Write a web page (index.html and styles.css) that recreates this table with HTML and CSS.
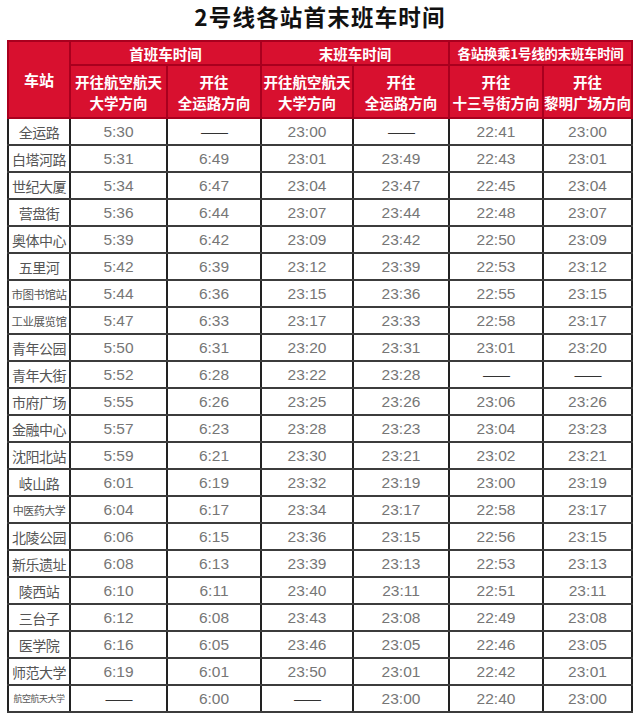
FILE: index.html
```html
<!DOCTYPE html>
<html lang="zh">
<head>
<meta charset="utf-8">
<link rel="stylesheet" href="styles.css">
</head>
<body>
<div class="title">2号线各站首末班车时间</div>
<table class="sched">
<colgroup>
<col class="c1"><col class="c2"><col class="c3"><col class="c4"><col class="c5"><col class="c6"><col class="c7">
</colgroup>
<thead>
<tr class="h1">
<th rowspan="2" class="stn-h">车站</th>
<th colspan="2">首班车时间</th>
<th colspan="2">末班车时间</th>
<th colspan="2" class="narrow">各站换乘1号线的末班车时间</th>
</tr>
<tr class="h2">
<th>开往航空航天<br>大学方向</th>
<th>开往<br>全运路方向</th>
<th>开往航空航天<br>大学方向</th>
<th>开往<br>全运路方向</th>
<th>开往<br>十三号街方向</th>
<th>开往<br>黎明广场方向</th>
</tr>
</thead>
<tbody>
<tr><td class="stn">全运路</td><td>5:30</td><td class="dash">——</td><td>23:00</td><td class="dash">——</td><td>22:41</td><td>23:00</td></tr>
<tr><td class="stn">白塔河路</td><td>5:31</td><td>6:49</td><td>23:01</td><td>23:49</td><td>22:43</td><td>23:01</td></tr>
<tr><td class="stn">世纪大厦</td><td>5:34</td><td>6:47</td><td>23:04</td><td>23:47</td><td>22:45</td><td>23:04</td></tr>
<tr><td class="stn">营盘街</td><td>5:36</td><td>6:44</td><td>23:07</td><td>23:44</td><td>22:48</td><td>23:07</td></tr>
<tr><td class="stn">奥体中心</td><td>5:39</td><td>6:42</td><td>23:09</td><td>23:42</td><td>22:50</td><td>23:09</td></tr>
<tr><td class="stn">五里河</td><td>5:42</td><td>6:39</td><td>23:12</td><td>23:39</td><td>22:53</td><td>23:12</td></tr>
<tr><td class="stn sm">市图书馆站</td><td>5:44</td><td>6:36</td><td>23:15</td><td>23:36</td><td>22:55</td><td>23:15</td></tr>
<tr><td class="stn sm">工业展览馆</td><td>5:47</td><td>6:33</td><td>23:17</td><td>23:33</td><td>22:58</td><td>23:17</td></tr>
<tr><td class="stn">青年公园</td><td>5:50</td><td>6:31</td><td>23:20</td><td>23:31</td><td>23:01</td><td>23:20</td></tr>
<tr><td class="stn">青年大街</td><td>5:52</td><td>6:28</td><td>23:22</td><td>23:28</td><td class="dash">——</td><td class="dash">——</td></tr>
<tr><td class="stn">市府广场</td><td>5:55</td><td>6:26</td><td>23:25</td><td>23:26</td><td>23:06</td><td>23:26</td></tr>
<tr><td class="stn">金融中心</td><td>5:57</td><td>6:23</td><td>23:28</td><td>23:23</td><td>23:04</td><td>23:23</td></tr>
<tr><td class="stn">沈阳北站</td><td>5:59</td><td>6:21</td><td>23:30</td><td>23:21</td><td>23:02</td><td>23:21</td></tr>
<tr><td class="stn">岐山路</td><td>6:01</td><td>6:19</td><td>23:32</td><td>23:19</td><td>23:00</td><td>23:19</td></tr>
<tr><td class="stn xs">中医药大学</td><td>6:04</td><td>6:17</td><td>23:34</td><td>23:17</td><td>22:58</td><td>23:17</td></tr>
<tr><td class="stn">北陵公园</td><td>6:06</td><td>6:15</td><td>23:36</td><td>23:15</td><td>22:56</td><td>23:15</td></tr>
<tr><td class="stn">新乐遗址</td><td>6:08</td><td>6:13</td><td>23:39</td><td>23:13</td><td>22:53</td><td>23:13</td></tr>
<tr><td class="stn">陵西站</td><td>6:10</td><td>6:11</td><td>23:40</td><td>23:11</td><td>22:51</td><td>23:11</td></tr>
<tr><td class="stn">三台子</td><td>6:12</td><td>6:08</td><td>23:43</td><td>23:08</td><td>22:49</td><td>23:08</td></tr>
<tr><td class="stn">医学院</td><td>6:16</td><td>6:05</td><td>23:46</td><td>23:05</td><td>22:46</td><td>23:05</td></tr>
<tr><td class="stn">师范大学</td><td>6:19</td><td>6:01</td><td>23:50</td><td>23:01</td><td>22:42</td><td>23:01</td></tr>
<tr><td class="stn tiny">航空航天大学</td><td class="dash">——</td><td>6:00</td><td class="dash">——</td><td>23:00</td><td>22:40</td><td>23:00</td></tr>
</tbody>
</table>
</body>
</html>
```

FILE: styles.css
```css
html, body {
  margin: 0;
  padding: 0;
  background: #ffffff;
}

.title {
  height: 40px;
  line-height: 32px;
  text-align: center;
  font-family: "Noto Sans CJK SC", "Liberation Serif", serif;
  font-weight: 700;
  font-size: 22.5px;
  color: #111111;
  letter-spacing: 1.2px;
}

.sched {
  margin-left: 7px;
  width: 624px;
  table-layout: fixed;
  border-collapse: collapse;
}

.c1 { width: 62px; }
.c2 { width: 97px; }
.c3 { width: 94px; }
.c4 { width: 92px; }
.c5 { width: 96px; }
.c6 { width: 94px; }
.c7 { width: 89px; }

.sched th {
  background: #d8102f;
  color: #ffffff;
  font-family: "Noto Sans CJK SC", "Liberation Sans", sans-serif;
  font-weight: 700;
  font-size: 14.5px;
  line-height: 21px;
  border: 2px solid #a9001e;
  padding: 0;
  text-align: center;
  vertical-align: middle;
  white-space: nowrap;
}

.sched th.stn-h {
  font-size: 15px;
}

.sched th.narrow {
  font-size: 13.5px;
  letter-spacing: -0.3px;
}

.h1 { height: 24px; }
.h2 { height: 53px; }

.sched td {
  height: 25px;
  padding: 0;
  text-align: center;
  vertical-align: middle;
  font-family: "Liberation Sans", "Noto Sans CJK SC", sans-serif;
  font-size: 15.5px;
  color: #767676;
  border-left: 2px solid #222222;
  border-right: 2px solid #222222;
  border-top: 2px solid #3c3c3c;
  border-bottom: 2px solid #3c3c3c;
}

.sched td.stn {
  font-family: "Noto Sans CJK SC", sans-serif;
  font-size: 14px;
  color: #555555;
  white-space: nowrap;
  letter-spacing: -0.5px;
}

.sched td.stn.sm { font-size: 11.5px; letter-spacing: -0.5px; }
.sched td.stn.xs { font-size: 11px; letter-spacing: -0.5px; }
.sched td.stn.tiny { font-size: 9px; letter-spacing: -0.5px; }

.sched td.dash {
  color: #333333;
  font-size: 14px;
  letter-spacing: -1px;
}
```
